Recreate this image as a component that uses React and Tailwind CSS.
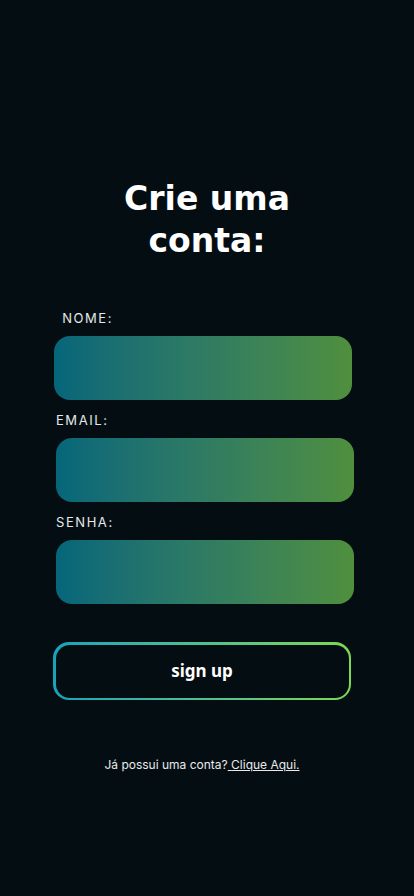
export default function App() {
  const fields = [
    { label: '\u00a0NOME:', offset: 'ml-[54px]', labelOffset: 'ml-[57px]' },
    { label: 'EMAIL:', offset: 'ml-[56px]', labelOffset: 'ml-[56px]' },
    { label: 'SENHA:', offset: 'ml-[56px]', labelOffset: 'ml-[56px]' },
  ];

  return (
    <main className="min-h-[896px] w-full bg-[#040e12] font-['Inter',sans-serif] text-white">
      <div className="flex flex-col pt-[178px]">
        <h1 className="text-center font-['DejaVu_Sans',sans-serif] text-[33px] font-bold leading-[42px]">
          Crie uma
          <br />
          conta:
        </h1>

        <form className="mt-[46px] flex flex-col" onSubmit={(e) => e.preventDefault()}>
          {fields.map((field, i) => (
            <div key={field.label} className={i === 0 ? '' : 'mt-[10px]'}>
              <label
                className={`${field.labelOffset} block h-[20px] text-[13px] leading-[20px] tracking-[0.12em] text-[#e6e9ea]`}
              >
                {field.label}
              </label>
              <input
                type={field.label === 'SENHA:' ? 'password' : 'text'}
                className={`${field.offset} mt-[8px] block h-[64px] w-[298px] rounded-[16px] bg-gradient-to-r from-[#05667a] to-[#4f8f3d] px-4 text-white outline-none`}
              />
            </div>
          ))}

          <div className="mt-[38px] ml-[53px] h-[58px] w-[298px] rounded-[16px] bg-gradient-to-r from-[#16a3ba] to-[#7cd94f] p-[2.5px]">
            <button
              type="submit"
              className="flex h-full w-full items-center justify-center rounded-[14px] bg-[#040e12] font-['Noto_Sans',sans-serif] text-[17px] font-bold"
            >
              sign up
            </button>
          </div>
        </form>

        <p className="mt-[56px] pr-[10px] text-center text-[12px] text-[#e8eaeb]">
          Já possui uma conta?
          <a href="#" className="underline">
            {' '}Clique Aqui.
          </a>
        </p>
      </div>
    </main>
  );
}
